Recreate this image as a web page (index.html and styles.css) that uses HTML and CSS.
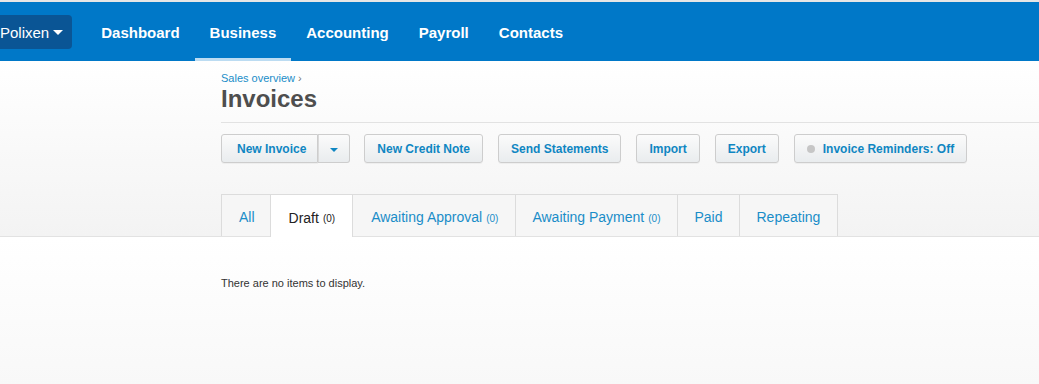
FILE: index.html
```html
<!DOCTYPE html>
<html lang="en">
<head>
    <meta charset="UTF-8">
    <meta name="viewport" content="width=device-width, initial-scale=1.0">
    <title>Invoices</title>
    <link rel="stylesheet" href="styles.css">
</head>
<body>
    <!-- Top navigation -->
    <header class="topbar">
        <nav class="topnav">
            <a href="#" class="org-switch">Polixen<span class="caret-down"></span></a>
            <a href="#" class="nav-link">Dashboard</a>
            <a href="#" class="nav-link active">Business</a>
            <a href="#" class="nav-link">Accounting</a>
            <a href="#" class="nav-link">Payroll</a>
            <a href="#" class="nav-link">Contacts</a>
        </nav>
    </header>

    <!-- Page header, toolbar and tabs -->
    <section class="page-top">
        <div class="page-head">
            <a href="#" class="breadcrumb">Sales overview <span class="crumb-sep">›</span></a>
            <h1>Invoices</h1>
        </div>

        <div class="toolbar">
            <div class="split-btn">
                <a href="#" class="btn btn-main">New Invoice</a>
                <a href="#" class="btn btn-caret"><span class="caret-small"></span></a>
            </div>
            <a href="#" class="btn">New Credit Note</a>
            <a href="#" class="btn">Send Statements</a>
            <a href="#" class="btn">Import</a>
            <a href="#" class="btn">Export</a>
            <a href="#" class="btn"><span class="status-dot"></span>Invoice Reminders: Off</a>
        </div>

        <ul class="tabs">
            <li class="tab"><a href="#">All</a></li>
            <li class="tab current"><a href="#">Draft <span class="count">(0)</span></a></li>
            <li class="tab"><a href="#">Awaiting Approval <span class="count">(0)</span></a></li>
            <li class="tab"><a href="#">Awaiting Payment <span class="count">(0)</span></a></li>
            <li class="tab"><a href="#">Paid</a></li>
            <li class="tab"><a href="#">Repeating</a></li>
        </ul>
    </section>

    <!-- List area -->
    <section class="list-body">
        <p class="empty">There are no items to display.</p>
    </section>
</body>
</html>
```

FILE: styles.css
```css
/* Theme colours */
:root {
    --brand-blue: #0078c8;
    --brand-dark: #0a5595;
    --link-blue: #1a8dc8;
    --btn-text: #0f86c2;
    --rule: #e2e2e2;
    --tab-border: #dcdcdc;
    --heading: #4e4e4e;
}

* {
    margin: 0;
    padding: 0;
    box-sizing: border-box;
}

body {
    font-family: 'Liberation Sans', Arial, sans-serif;
    background: #fff;
    color: #333;
    height: 100vh;
    overflow: hidden;
    display: flex;
    flex-direction: column;
}

a {
    text-decoration: none;
}

/* Top bar */
.topbar {
    background: var(--brand-blue);
    border-top: 2px solid #e6e6e6;
    height: 61px;
}

.topnav {
    display: flex;
    align-items: stretch;
    height: 100%;
}

.org-switch {
    align-self: center;
    display: flex;
    align-items: center;
    height: 34px;
    margin-left: -10px;
    margin-top: 1px;
    padding: 0 9px 0 10px;
    background: var(--brand-dark);
    border-radius: 4px;
    color: #fff;
    font-size: 15px;
    margin-right: 14px;
}

.caret-down {
    display: inline-block;
    margin-left: 4px;
    border-left: 5px solid transparent;
    border-right: 5px solid transparent;
    border-top: 5px solid #fff;
}

.nav-link {
    display: flex;
    align-items: center;
    padding: 5px 15px 0;
    color: #fff;
    font-size: 15px;
    font-weight: bold;
    border-bottom: 3px solid transparent;
}

.nav-link.active {
    border-bottom-color: #bcdcf2;
}

/* Page top area */
.page-top {
    padding-left: 221px;
    background: linear-gradient(to bottom, #fff, #f3f3f3);
    border-bottom: 1px solid var(--rule);
}

.page-head {
    padding-top: 11px;
    padding-bottom: 9px;
    border-bottom: 1px solid var(--rule);
}

.breadcrumb {
    display: block;
    font-size: 11px;
    line-height: 13px;
    color: var(--link-blue);
}

.crumb-sep {
    color: #777;
}

h1 {
    font-size: 24px;
    line-height: 28px;
    font-weight: bold;
    color: var(--heading);
}

/* Buttons */
.toolbar {
    display: flex;
    gap: 15px;
    margin-top: 11px;
}

.btn {
    display: flex;
    align-items: center;
    height: 29px;
    padding: 0 12px;
    border: 1px solid #cdcdcd;
    border-radius: 3px;
    background: linear-gradient(to bottom, #fbfbfb, #e9ecee);
    color: var(--btn-text);
    font-size: 12px;
    font-weight: bold;
    box-shadow: 0 1px 0 rgba(0, 0, 0, 0.04);
}

.split-btn {
    display: flex;
    margin-right: -1px;
}

.split-btn .btn-main {
    padding: 0 11px 0 15px;
    border-radius: 3px 0 0 3px;
}

.split-btn .btn-caret {
    width: 32px;
    padding: 0;
    justify-content: center;
    border-left: none;
    border-radius: 0 3px 3px 0;
    box-shadow: inset 1px 0 0 #dadada;
}

.caret-small {
    display: inline-block;
    margin-top: 2px;
    border-left: 4px solid transparent;
    border-right: 4px solid transparent;
    border-top: 4px solid var(--btn-text);
}

.status-dot {
    width: 8px;
    height: 8px;
    border-radius: 50%;
    background: #c6c6c6;
    margin-right: 8px;
}

/* Tabs */
.tabs {
    display: flex;
    list-style: none;
    margin-top: 31px;
}

.tab {
    border: 1px solid var(--tab-border);
    border-bottom: none;
    margin-right: -1px;
    background: #f6f6f6;
}

.tab a {
    display: flex;
    align-items: center;
    gap: 4px;
    height: 41px;
    padding: 3px 17px 0 17px;
    font-size: 14px;
    color: var(--link-blue);
}

.tab:first-child a {
    padding: 3px 15px 0 17px;
}

.tab:nth-child(2) a,
.tab:nth-child(3) a {
    padding: 3px 17px 0 18px;
}

.tab:nth-child(4) a {
    padding: 3px 17px 0 16px;
}

.tab:nth-child(5) a {
    padding: 3px 16px 0 16px;
}

.tab.current {
    background: #fff;
    position: relative;
    margin-bottom: -1px;
    z-index: 1;
}

.tab.current a {
    height: 42px;
    color: #222;
}

.count {
    font-size: 10px;
    padding-top: 2px;
}

/* List area */
.list-body {
    flex: 1;
    padding: 40px 0 0 221px;
    background: linear-gradient(to bottom, #fff, #f8f8f8);
}

.empty {
    font-size: 11px;
    line-height: 13px;
    color: #333;
}
```
